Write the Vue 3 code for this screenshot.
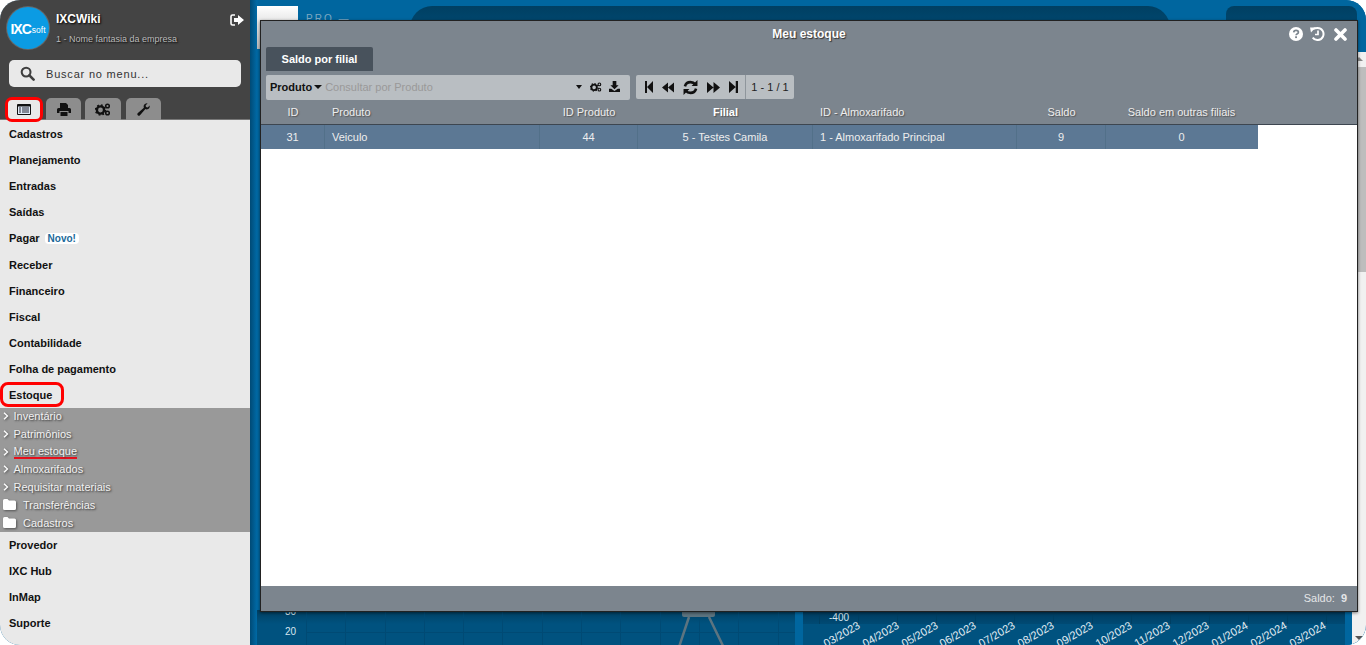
<template>
  <div class="app">
    <aside class="sidebar">
      <header class="side-head">
        <div class="brand">
          <div class="logo"><b>IXC</b><span>soft</span></div>
          <div class="brand-text">
            <div class="brand-name">IXCWiki</div>
            <div class="brand-sub">1 - Nome fantasia da empresa</div>
          </div>
          <svg class="logout" viewBox="0 0 14 12" width="14" height="12">
            <path fill="none" stroke="#fff" stroke-width="1.6" d="M5 1H2.5Q1 1 1 2.5v7Q1 11 2.5 11H5" />
            <path fill="#fff" d="M4 4h4V1l6 5-6 5V8H4z" />
          </svg>
        </div>
        <div class="search">
          <svg viewBox="0 0 16 16" width="15" height="15">
            <circle cx="6.5" cy="6.5" r="4.7" fill="none" stroke="#3f3f3f" stroke-width="2.2" />
            <path d="M10 10l4.5 4.5" stroke="#3f3f3f" stroke-width="2.8" stroke-linecap="round" />
          </svg>
          <span>Buscar no menu...</span>
        </div>
        <div class="tabs">
          <div class="tab active">
            <svg viewBox="0 0 14 11" width="14" height="11">
              <rect width="14" height="11" rx="1" fill="#111" />
              <rect x="1" y="2.5" width="12" height="7.5" fill="#dfeaf5" />
              <path d="M2 4h2M5 4h7M2 6h2M5 6h7M2 8h2M5 8h7" stroke="#223" stroke-width="1" />
            </svg>
          </div>
          <div class="tab t2">
            <svg viewBox="0 0 14 13" width="14" height="13">
              <path fill="#111" d="M3 0h6l2 2v3H3zM1.5 5h11Q14 5 14 6.5V10h-2.5V8h-9v2H0V6.5Q0 5 1.5 5zM3.500 9h7v4h-7z" />
            </svg>
          </div>
          <div class="tab t3">
            <svg viewBox="0 0 16 13" width="16" height="13">
              <circle cx="5.500" cy="7" r="3.600" fill="none" stroke="#111" stroke-width="2.400" />
              <circle cx="5.500" cy="7" r="5" fill="none" stroke="#111" stroke-width="1.500" stroke-dasharray="1.800 2.100" />
              <circle cx="12.500" cy="3" r="1.800" fill="none" stroke="#111" stroke-width="1.500" />
              <circle cx="12.500" cy="10" r="1.800" fill="none" stroke="#111" stroke-width="1.500" />
            </svg>
          </div>
          <div class="tab t4">
            <svg viewBox="0 0 13 13" width="13" height="13">
              <path fill="#111" d="M12.700 2.600Q13 5 11.200 6 9.700 6.700 8.400 6.100L3 12.300Q1.900 13.400.8 12.300-.2 11.200.9 10.100L6.900 4.700Q6.300 3.200 7.100 1.800 8.200 0 10.600.3L8.600 2.400 9 4.100l1.700.5z" />
            </svg>
          </div>
        </div>
      </header>

      <nav class="menu">
        <template v-for="item in menu" :key="item.label">
          <div class="menu-item" :class="{ boxed: item.boxed }">
            <span class="menu-label">{{ item.label }}</span>
            <span v-if="item.badge" class="badge">{{ item.badge }}</span>
          </div>
          <div v-if="item.children" class="submenu">
            <div v-for="sub in item.children" :key="sub.label" class="sub-item" :class="{ folder: sub.folder }">
              <svg v-if="sub.folder" class="sub-icon" viewBox="0 0 13 11" width="13" height="11">
                <path fill="#fff" d="M1.500 0h3L6 1.500h5.500Q13 1.500 13 3v6.500Q13 11 11.500 11h-10Q0 11 0 9.500v-8Q0 0 1.500 0z" />
              </svg>
              <svg v-else class="sub-icon" viewBox="0 0 6 8" width="6" height="8">
                <path fill="none" stroke="#fff" stroke-width="1.300" d="M1 .8L4.500 4 1 7.200" />
              </svg>
              <span class="sub-label" :class="{ marked: sub.marked }">{{ sub.label }}</span>
            </div>
          </div>
        </template>
      </nav>
    </aside>

    <main class="dash">
      <div class="dash-top">
        <div class="white-box"></div>
        <div class="pro">PRO —</div>
        <div class="panel-a"></div>
        <div class="panel-b"></div>
      </div>
      <div class="dash-bottom">
        <section class="chart chart-left">
          <div class="chart-labels">
            <span>30</span>
            <span>20</span>
          </div>
          <div class="grid-lines">
            <svg class="stand" viewBox="0 0 60 40" width="60" height="40">
              <rect x="8" y="0" width="33" height="7" rx="2" fill="#5d7480" />
              <path d="M15 7L4 40M35 7l16 33" stroke="#5d7480" stroke-width="2.500" fill="none" />
            </svg>
          </div>
        </section>
        <section class="chart chart-right">
          <div class="y-label">-400</div>
          <div class="dates">
            <span v-for="d in dates" :key="d">{{ d }}</span>
          </div>
        </section>
      </div>
      <div class="page-scroll">
        <i class="up"></i>
        <i class="thumb"></i>
        <i class="down"></i>
      </div>
    </main>

    <div class="modal">
      <div class="modal-title">
        <span>Meu estoque</span>
        <div class="modal-actions">
          <svg viewBox="0 0 14 14" width="14" height="14">
            <circle cx="7" cy="7" r="7" fill="#fff" />
            <path d="M4.700 5.400Q4.900 3.300 7 3.300 9.400 3.300 9.400 5.200 9.400 6.300 8 7 7.100 7.500 7.100 8.300" fill="none" stroke="#7c858e" stroke-width="1.700" />
            <rect x="6.100" y="9.300" width="1.900" height="1.800" fill="#7c858e" />
          </svg>
          <svg viewBox="0 0 15 14" width="15" height="14">
            <path fill="none" stroke="#fff" stroke-width="2" d="M3 2.200Q5 1 7.500 1a6 6 0 1 1-4.800 9.600" />
            <path fill="#fff" d="M0 .5h5.500L1 5.500z" />
            <path fill="none" stroke="#fff" stroke-width="1.700" d="M8 3.500V7.500H5" />
          </svg>
          <svg viewBox="0 0 13 13" width="13" height="13">
            <path d="M2 2l9 9M11 2l-9 9" stroke="#fff" stroke-width="3.600" stroke-linecap="round" />
          </svg>
        </div>
      </div>
      <div class="modal-tabs">
        <div class="modal-tab">Saldo por filial</div>
      </div>
      <div class="toolbar">
        <div class="filter">
          <b>Produto</b>
          <i class="caret"></i>
          <span class="placeholder">Consultar por Produto</span>
          <i class="caret end"></i>
          <svg viewBox="0 0 16 13" width="12" height="10">
            <circle cx="5.500" cy="7" r="3.600" fill="none" stroke="#111" stroke-width="2.400" />
            <circle cx="5.500" cy="7" r="5" fill="none" stroke="#111" stroke-width="1.500" stroke-dasharray="1.800 2.100" />
            <circle cx="12.500" cy="3" r="1.800" fill="none" stroke="#111" stroke-width="1.500" />
            <circle cx="12.500" cy="10" r="1.800" fill="none" stroke="#111" stroke-width="1.500" />
          </svg>
          <svg class="dl" viewBox="0 0 12 12" width="11" height="11">
            <path fill="#111" d="M4 0h4v4.500h2.500L6 9 1.500 4.500H4zM0 8.500h2.500L6 11l3.500-2.500H12V12H0z" />
          </svg>
        </div>
        <div class="pager">
          <div class="pager-btns">
            <svg viewBox="0 0 10 11" width="8" height="12" preserveAspectRatio="none"><path fill="#111" d="M0 0h2.500v11H0zM2.500 5.500L10 0v11z" /></svg>
            <svg viewBox="0 0 13 11" width="12" height="11"><path fill="#111" d="M0 5.500L6.500 0v11zM6.500 5.500L13 0v11z" /></svg>
            <svg viewBox="0 0 14 14" width="15" height="15">
              <path fill="none" stroke="#111" stroke-width="2.400" d="M1.800 6Q2.800 2 7 2q2.800 0 4.500 2M12.200 8Q11.200 12 7 12q-2.800 0-4.500-2" />
              <path fill="#111" d="M13.500 0v5.500H8zM.5 14V8.500H6z" />
            </svg>
            <svg viewBox="0 0 13 11" width="13" height="11"><path fill="#111" d="M0 0l6.500 5.500L0 11zM6.500 0L13 5.500 6.500 11z" /></svg>
            <svg viewBox="0 0 10 11" width="9" height="12" preserveAspectRatio="none"><path fill="#111" d="M0 0l7.500 5.500L0 11zM7.500 0H10v11H7.500z" /></svg>
          </div>
          <div class="pager-count">1 - 1 / 1</div>
        </div>
      </div>
      <div class="grid-table">
        <div class="tr thead">
          <div v-for="col in columns" :key="col.label" class="td" :class="[col.align, { strong: col.strong }]">{{ col.label }}</div>
        </div>
        <div class="table-body">
          <div class="tr row">
            <div v-for="col in columns" :key="col.label" class="td" :class="col.align">{{ col.value }}</div>
          </div>
        </div>
      </div>
      <footer class="modal-foot">
        <span>Saldo:</span><b>9</b>
      </footer>
    </div>
  </div>
</template>

<script setup>
const menu = [
  { label: "Cadastros" },
  { label: "Planejamento" },
  { label: "Entradas" },
  { label: "Saídas" },
  { label: "Pagar", badge: "Novo!" },
  { label: "Receber" },
  { label: "Financeiro" },
  { label: "Fiscal" },
  { label: "Contabilidade" },
  { label: "Folha de pagamento" },
  {
    label: "Estoque",
    boxed: true,
    children: [
      { label: "Inventário" },
      { label: "Patrimônios" },
      { label: "Meu estoque", marked: true },
      { label: "Almoxarifados" },
      { label: "Requisitar materiais" },
      { label: "Transferências", folder: true },
      { label: "Cadastros", folder: true },
    ],
  },
  { label: "Provedor" },
  { label: "IXC Hub" },
  { label: "InMap" },
  { label: "Suporte" },
];

const columns = [
  { label: "ID", value: "31", align: "center" },
  { label: "Produto", value: "Veiculo", align: "left" },
  { label: "ID Produto", value: "44", align: "center" },
  { label: "Filial", value: "5 - Testes Camila", align: "center", strong: true },
  { label: "ID - Almoxarifado", value: "1 - Almoxarifado Principal", align: "left" },
  { label: "Saldo", value: "9", align: "center" },
  { label: "Saldo em outras filiais", value: "0", align: "center" },
];

const dates = [
  "03/2023", "04/2023", "05/2023", "06/2023", "07/2023", "08/2023", "09/2023",
  "10/2023", "11/2023", "12/2023", "01/2024", "02/2024", "03/2024",
];
</script>

<style>
html, body {
  margin: 0;
  background: #fff;
  overflow: hidden;
}
</style>

<style scoped>
.app {
  position: relative;
  display: flex;
  width: 1366px;
  height: 645px;
  overflow: hidden;
  border-radius: 20px;
  font-family: "Liberation Sans", Arial, sans-serif;
  background: #00669f;
}

/* sidebar */
.sidebar {
  width: 250px;
  flex: none;
  display: flex;
  flex-direction: column;
  background: #e9e9e9;
}
.side-head {
  height: 120px;
  flex: none;
  box-sizing: border-box;
  background: #444;
  border-bottom: 1px solid #777;
  padding: 7px 9px 0 7px;
}
.brand {
  display: flex;
  align-items: flex-start;
  height: 53px;
}
.logo {
  width: 42px;
  height: 42px;
  flex: none;
  box-sizing: border-box;
  border-radius: 50%;
  background: #0b9be3;
  box-shadow: 0 0 0 1px #666;
  display: flex;
  align-items: center;
  justify-content: center;
  color: #fff;
  padding-top: 1px;
}
.logo b {
  font-size: 14px;
  letter-spacing: -1px;
}
.logo span {
  font-size: 8.500px;
  margin-left: 1px;
  margin-top: 3px;
}
.brand-text {
  margin-left: 7px;
  flex: 1;
}
.brand-name {
  margin-top: 5px;
  font-size: 12px;
  font-weight: bold;
  color: #fff;
  text-shadow: 1px 1px 2px #000;
}
.brand-sub {
  margin-top: 8px;
  font-size: 9px;
  color: #bbb;
  text-shadow: 1px 1px 2px #000;
}
.logout {
  margin: 7px -3px 0 0;
}
.search {
  margin-left: 2px;
  height: 27px;
  display: flex;
  align-items: center;
  background: #e9e9e9;
  border-radius: 5px;
  padding-left: 11px;
  font-size: 11px;
  letter-spacing: 0.8px;
  color: #333;
}
.search span {
  margin-left: 11px;
}
.tabs {
  display: flex;
  margin: 11px 0 0 -2px;
}
.tab {
  height: 22px;
  background: #8d8d8d;
  border-radius: 5px 5px 0 0;
  display: flex;
  align-items: center;
  justify-content: center;
}
.tab.active {
  box-sizing: border-box;
  width: 38px;
  height: 25px;
  margin-top: -1px;
  background: #e9e9e9;
  border: 3px solid #f00;
  border-radius: 7px;
}
.t2 { width: 35px; margin-left: 3px; }
.t3 { width: 36px; margin-left: 4px; }
.t4 { width: 35px; margin-left: 5px; }

.menu {
  flex: 1;
  padding-top: 1px;
}
.menu-item {
  height: 26.1px;
  display: flex;
  align-items: center;
  padding-left: 9px;
  font-size: 11px;
  font-weight: bold;
  color: #111;
}
.menu-item.boxed {
  position: relative;
}
.menu-item.boxed::after {
  content: "";
  position: absolute;
  left: 0;
  top: 0;
  width: 64px;
  height: 25px;
  box-sizing: border-box;
  border: 3px solid #f00;
  border-radius: 8px;
}
.badge {
  margin-left: 5px;
  padding: 0 3px;
  background: #fff;
  border-radius: 4px;
  font-size: 10px;
  line-height: 11px;
  color: #1a6a9a;
}
.submenu {
  height: 124px;
  background: #999;
}
.sub-item {
  height: 17.800px;
  box-sizing: border-box;
  padding-bottom: 2px;
  display: flex;
  align-items: center;
  font-size: 11px;
  color: #f2f2f2;
  text-shadow: 1px 1px 2px #333;
}
.sub-icon {
  margin-left: 3px;
  flex: none;
  filter: drop-shadow(1px 1px 1px #555);
}
.sub-label {
  margin-left: 4.500px;
}
.sub-item.folder .sub-label {
  margin-left: 7px;
}
.sub-label.marked {
  border-bottom: 2px solid #e8101c;
  line-height: 12px;
}

/* blurred dashboard behind the modal */
.dash {
  position: relative;
  flex: 1;
  display: flex;
  flex-direction: column;
  justify-content: space-between;
  background: linear-gradient(90deg, #004a75 0, #006aa6 7px, #00669f 8px);
}
.dash-top {
  display: flex;
  padding: 6px 0 0 7px;
}
.white-box {
  width: 41px;
  height: 43px;
  background: linear-gradient(#fff, #bbb);
}
.pro {
  margin-left: 8px;
  width: 104px;
  font-size: 10px;
  letter-spacing: 2px;
  color: #7ea9c2;
  padding-top: 7px;
}
.panel-a {
  width: 760px;
  height: 40px;
  border-radius: 22px 22px 0 0;
  background: linear-gradient(#003f62, #00527f);
}
.panel-b {
  width: 131px;
  height: 40px;
  margin-left: 56px;
  border-radius: 8px 8px 0 0;
  background: linear-gradient(#003f62, #00527f);
}
.dash-bottom {
  display: flex;
  height: 35px;
}
.chart {
  height: 35px;
  overflow: hidden;
  background: #00527f;
  position: relative;
}
.chart-left {
  width: 538px;
  margin-left: 7px;
  display: flex;
  background: linear-gradient(#003f62 0, #00527f 14px);
}
.chart-labels {
  width: 49px;
  flex: none;
  text-align: right;
  font-size: 10px;
  color: #d8e6ef;
  margin-top: -8px;
}
.chart-labels span {
  display: block;
  height: 20px;
  line-height: 20px;
  padding-right: 10px;
}
.grid-lines {
  flex: 1;
  position: relative;
  background:
    linear-gradient(transparent 22px, #004a74 22px, #004a74 23px, transparent 23px),
    repeating-linear-gradient(90deg, #004a74 0 1px, transparent 1px 39.300px);
}
.stand {
  position: absolute;
  left: 368px;
  top: 0;
}
.chart-right {
  width: 542px;
  margin-left: 8px;
}
.y-label {
  height: 14px;
  box-sizing: border-box;
  padding: 1px 0 0 26px;
  font-size: 10px;
  line-height: 14px;
  color: #d8e6ef;
  background:
    linear-gradient(90deg, #003f62 1px, transparent 1px) 55px 0 / 39px 100% repeat-x,
    linear-gradient(#003a5c, #004a74);
}
.dates {
  display: flex;
  padding-left: 14px;
  margin-top: -5px;
}
.dates span {
  width: 38.800px;
  flex: none;
  display: flex;
  justify-content: flex-end;
  font-size: 11px;
  line-height: 12px;
  color: #e4eef4;
  white-space: nowrap;
  transform-origin: 100% 0;
  transform: rotate(-30deg);
}
.page-scroll {
  position: absolute;
  right: 0;
  top: 52px;
  bottom: 0;
  width: 14px;
  background: #f1f1f1;
}
.page-scroll .thumb {
  position: absolute;
  left: 1px;
  right: 0;
  top: 15px;
  height: 205px;
  background: #bdbdbd;
}
.page-scroll .up,
.page-scroll .down {
  position: absolute;
  left: 3px;
  border-left: 4px solid transparent;
  border-right: 4px solid transparent;
}
.page-scroll .up {
  top: 5px;
  border-bottom: 4px solid #888;
}
.page-scroll .down {
  bottom: 5px;
  border-top: 4px solid #555;
}

/* modal */
.modal {
  position: absolute;
  left: 260px;
  top: 20px;
  width: 1098px;
  height: 592px;
  box-sizing: border-box;
  border: 1px solid #222;
  background: #7c858e;
  display: flex;
  flex-direction: column;
  box-shadow: 0 1px 3px rgba(0, 0, 0, 0.5);
}
.modal-title {
  position: relative;
  height: 26px;
  flex: none;
  display: flex;
  align-items: center;
  justify-content: center;
  font-size: 12px;
  font-weight: bold;
  color: #fff;
  text-shadow: 1px 1px 1px #333;
}
.modal-actions {
  position: absolute;
  right: 10px;
  top: 6px;
  display: flex;
  align-items: center;
  gap: 7px;
}
.modal-actions svg:last-child {
  margin-left: 2px;
}
.modal-tabs {
  flex: none;
  padding-left: 5px;
}
.modal-tab {
  width: 107px;
  height: 24px;
  box-sizing: border-box;
  background: #48525c;
  border-radius: 2px 2px 0 0;
  text-align: center;
  line-height: 24px;
  font-size: 11px;
  font-weight: bold;
  color: #fff;
}
.toolbar {
  flex: none;
  display: flex;
  margin: 4px 0 0 5px;
  gap: 6px;
  height: 25px;
}
.filter {
  width: 364px;
  display: flex;
  align-items: center;
  background: #b9bec2;
  border-radius: 2px;
  padding: 0 0 2px 4px;
  box-sizing: border-box;
  font-size: 11px;
  color: #111;
}
.caret {
  display: block;
  margin-left: 2px;
  border-left: 4px solid transparent;
  border-right: 4px solid transparent;
  border-top: 4px solid #111;
}
.caret.end {
  margin: 0 8px 0 0;
  border-left-width: 3.500px;
  border-right-width: 3.500px;
}
.placeholder {
  flex: 1;
  margin-left: 3px;
  color: #999;
}
.dl {
  margin: 0 10px 0 7px;
}
.pager {
  display: flex;
  height: 24px;
  background: #b9bec2;
  border-radius: 2px;
  font-size: 11px;
  color: #222;
}
.pager-btns {
  width: 110px;
  box-sizing: border-box;
  display: flex;
  align-items: center;
  gap: 9px;
  padding-left: 9px;
  border-right: 1px solid #8f969c;
}
.pager-count {
  width: 48px;
  text-align: center;
  line-height: 24px;
}
.grid-table {
  flex: 1;
  display: flex;
  flex-direction: column;
  min-height: 0;
}
.tr {
  display: grid;
  grid-template-columns: 64px 215px 98px 175px 204px 89px 151px;
  font-size: 11px;
  color: #eee;
}
.thead {
  height: 24px;
  flex: none;
  align-items: center;
  border-bottom: 1px solid #3d4650;
  text-shadow: 1px 1px 1px #555;
}
.strong {
  font-weight: bold;
  color: #fff;
}
.table-body {
  flex: 1;
  background: #fff;
}
.row {
  width: 997px;
  height: 24px;
  background: #5c7894;
  line-height: 24px;
}
.row .td {
  border-right: 1px solid #527089;
}
.row .td:last-child {
  border-right: 0;
}
.td {
  white-space: nowrap;
  box-sizing: border-box;
}
.td.center {
  text-align: center;
}
.td.left {
  padding-left: 7px;
}
.modal-foot {
  height: 25px;
  flex: none;
  box-sizing: border-box;
  display: flex;
  align-items: center;
  justify-content: flex-end;
  padding: 0 10px 2px 0;
  font-size: 11px;
  color: #e4e6e8;
}
.modal-foot b {
  margin-left: 6px;
}
</style>
